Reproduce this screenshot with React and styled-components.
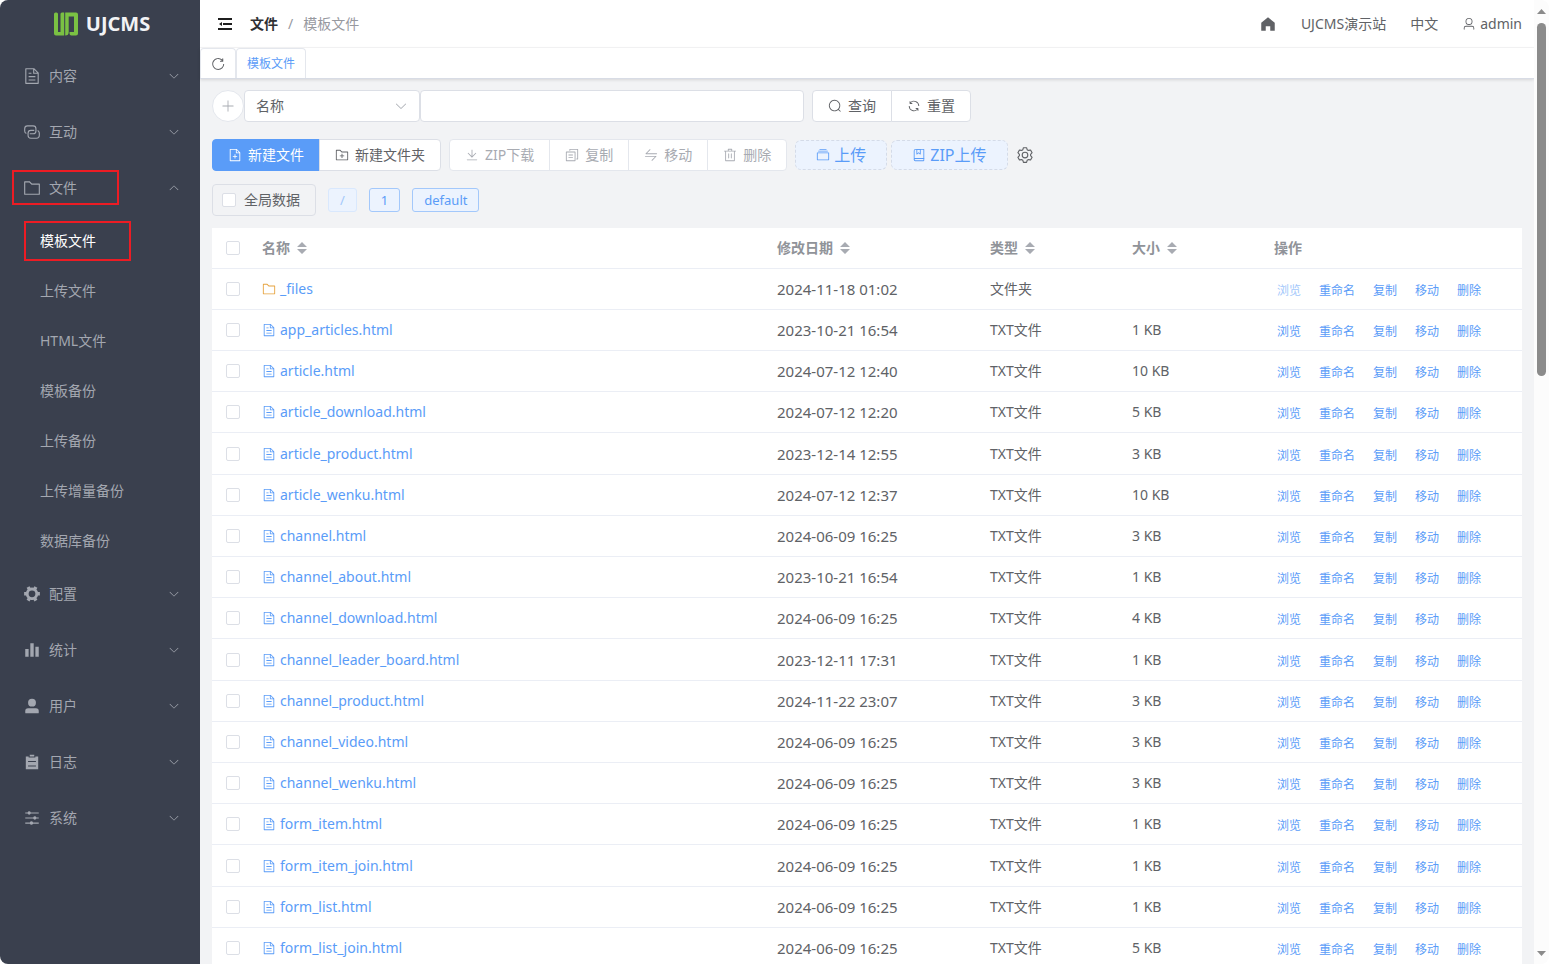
import React, { useState } from 'react';
import styled, { createGlobalStyle, css } from 'styled-components';

/* ─────────────────────────────────────────────
   ICONS
───────────────────────────────────────────── */
const DOC_BODY = 'M832 384H576V128H192v768h640V384zm-26.496-64L640 154.496V320h165.504zM160 64h480l256 256v608a32 32 0 0 1-32 32H160a32 32 0 0 1-32-32V96a32 32 0 0 1 32-32z';
const FOLDER_BODY = 'M128 192v640h768V320H485.76L357.504 192H128zm-32-64h287.872l128.384 128H928a32 32 0 0 1 32 32v576a32 32 0 0 1-32 32H96a32 32 0 0 1-32-32V160a32 32 0 0 1 32-32z';

const PATHS = {
  document: [DOC_BODY, 'M320 512h384v64H320v-64zm0-192h160v64H320v-64zm0 384h384v64H320v-64z'],
  documentAdd: [DOC_BODY, 'M480 576V448h64v128h128v64H544v128h-64V640H352v-64h128z'],
  folder: [FOLDER_BODY],
  folderAdd: [FOLDER_BODY, 'M480 544V416h64v128h128v64H544v128h-64V608H352v-64h128z'],
  arrowDown: ['M831.872 340.864 512 652.672 192.128 340.864a30.592 30.592 0 0 0-42.752 0 29.12 29.12 0 0 0 0 41.6L489.664 714.24a32 32 0 0 0 44.672 0l340.288-331.712a29.12 29.12 0 0 0 0-41.728 30.592 30.592 0 0 0-42.752 0z'],
  search: ['m795.904 750.72 124.992 124.928a32 32 0 0 1-45.248 45.248L750.656 795.904a416 416 0 1 1 45.248-45.248zM480 832a352 352 0 1 0 0-704 352 352 0 0 0 0 704z'],
  refresh: ['M771.776 794.88A384 384 0 0 1 128 512h64a320 320 0 0 0 555.712 216.448H654.72a32 32 0 1 1 0-64h149.056a32 32 0 0 1 32 32v148.928a32 32 0 1 1-64 0v-50.56zM276.288 295.616h92.992a32 32 0 0 1 0 64H220.16a32 32 0 0 1-32-32V178.56a32 32 0 0 1 64 0v50.56A384 384 0 0 1 896.128 512h-64a320 320 0 0 0-555.776-216.384z'],
  refreshRight: ['M784.512 230.272v-50.56a32 32 0 1 1 64 0v149.056a32 32 0 0 1-32 32H667.52a32 32 0 1 1 0-64h92.992A320 320 0 1 0 524.8 833.152a320 320 0 0 0 320-320h64a384 384 0 0 1-384 384 384 384 0 0 1-384-384 384 384 0 0 1 643.712-282.88z'],
  plus: ['M480 480V128a32 32 0 0 1 64 0v352h352a32 32 0 1 1 0 64H544v352a32 32 0 1 1-64 0V544H128a32 32 0 0 1 0-64h352z'],
  download: ['M160 832h704a32 32 0 1 1 0 64H160a32 32 0 1 1 0-64zm384-253.696 236.288-236.352 45.248 45.248L508.8 704 192 387.2l45.248-45.248L480 584.704V128h64v450.304z'],
  copy: ['M128 320v576h576V320H128zm-32-64h640a32 32 0 0 1 32 32v640a32 32 0 0 1-32 32H96a32 32 0 0 1-32-32V288a32 32 0 0 1 32-32zM960 96v704a32 32 0 0 1-32 32h-96v-64h64V128H384v64h-64V96a32 32 0 0 1 32-32h576a32 32 0 0 1 32 32zM256 672h320v64H256v-64zm0-192h320v64H256v-64z'],
  move: ['M118.656 438.656a32 32 0 0 1 0-45.248L416 96l4.48-3.776A32 32 0 0 1 461.248 96l3.712 4.48a32.064 32.064 0 0 1-3.712 40.832L218.56 384H928a32 32 0 1 1 0 64H141.248a32 32 0 0 1-22.592-9.344zM64 608a32 32 0 0 1 32-32h786.752a32 32 0 0 1 22.656 54.592L608 928l-4.48 3.776a32.064 32.064 0 0 1-40.832-49.024L805.632 640H96a32 32 0 0 1-32-32z'],
  trash: ['M160 256H96a32 32 0 0 1 0-64h256V95.936a32 32 0 0 1 32-32h256a32 32 0 0 1 32 32V192h256a32 32 0 1 1 0 64h-64v672a32 32 0 0 1-32 32H192a32 32 0 0 1-32-32V256zm448-64v-64H416v64h192zM224 896h576V256H224v640zm192-128a32 32 0 0 1-32-32V416a32 32 0 0 1 64 0v320a32 32 0 0 1-32 32zm192 0a32 32 0 0 1-32-32V416a32 32 0 0 1 64 0v320a32 32 0 0 1-32 32z'],
  files: ['M128 384v448h768V384H128zm-32-64h832a32 32 0 0 1 32 32v512a32 32 0 0 1-32 32H96a32 32 0 0 1-32-32V352a32 32 0 0 1 32-32zm64-128h704v64H160v-64zm96-128h512v64H256V64z'],
  collection: [
    'M192 736h640V128H256a64 64 0 0 0-64 64v544zm64-672h608a32 32 0 0 1 32 32v672a32 32 0 0 1-32 32H160l-32 57.536V192A128 128 0 0 1 256 64z',
    'M240 800a48 48 0 1 0 0 96h592v-96H240zm0-64h656v160a64 64 0 0 1-64 64H240a112 112 0 0 1 0-224z',
    'M384 128v250.88l96-76.8 96 76.8V128H384zm-64-64h320v381.44a32 32 0 0 1-51.968 24.96L480 384l-108.032 86.4A32 32 0 0 1 320 445.44V64z',
  ],
  setting: ['M600.704 64a32 32 0 0 1 30.464 22.208l35.2 109.376c14.784 7.232 28.928 15.36 42.432 24.512l112.384-24.192a32 32 0 0 1 34.432 15.36L944.32 364.8a32 32 0 0 1-4.032 37.504l-77.12 85.12a357.12 357.12 0 0 1 0 49.024l77.12 85.248a32 32 0 0 1 4.032 37.504l-88.704 153.6a32 32 0 0 1-34.432 15.296L708.8 803.904c-13.44 9.088-27.648 17.28-42.368 24.512l-35.264 109.376A32 32 0 0 1 600.704 960H423.296a32 32 0 0 1-30.464-22.208L357.696 828.48a351.616 351.616 0 0 1-42.56-24.64l-112.32 24.256a32 32 0 0 1-34.432-15.36L79.68 659.2a32 32 0 0 1 4.032-37.504l77.12-85.248a357.12 357.12 0 0 1 0-48.896l-77.12-85.248A32 32 0 0 1 79.68 364.8l88.704-153.6a32 32 0 0 1 34.432-15.296l112.32 24.256c13.568-9.152 27.776-17.408 42.56-24.64l35.2-109.312A32 32 0 0 1 423.232 64H600.64zm-23.424 64H446.72l-36.352 113.088-24.512 11.968a294.113 294.113 0 0 0-34.816 20.096l-22.656 15.36-116.224-25.088-65.28 113.152 79.68 88.192-1.92 27.136a293.12 293.12 0 0 0 0 40.192l1.92 27.136-79.808 88.192 65.344 113.152 116.224-25.024 22.656 15.296a294.113 294.113 0 0 0 34.816 20.096l24.512 11.968L446.72 896h130.688l36.48-113.152 24.448-11.904a288.282 288.282 0 0 0 34.752-20.096l22.592-15.296 116.288 25.024 65.28-113.152-79.744-88.192 1.92-27.136a293.12 293.12 0 0 0 0-40.256l-1.92-27.136 79.808-88.128-65.344-113.152-116.288 24.96-22.592-15.232a287.616 287.616 0 0 0-34.752-20.096l-24.448-11.904L577.344 128zM512 320a192 192 0 1 1 0 384 192 192 0 0 1 0-384zm0 64a128 128 0 1 0 0 256 128 128 0 0 0 0-256z'],
  home: ['M512 128 128 447.936V896h255.936V640H640v256h255.936V447.936z'],
  user: ['M512 512a192 192 0 1 0 0-384 192 192 0 0 0 0 384zm0 64a256 256 0 1 1 0-512 256 256 0 0 1 0 512zm320 320v-96a96 96 0 0 0-96-96H288a96 96 0 0 0-96 96v96a32 32 0 1 1-64 0v-96a160 160 0 0 1 160-160h448a160 160 0 0 1 160 160v96a32 32 0 1 1-64 0z'],
  userFilled: ['M288 320a224 224 0 1 0 448 0 224 224 0 1 0-448 0zm544 608H160a32 32 0 0 1-32-32v-96a160 160 0 0 1 160-160h448a160 160 0 0 1 160 160v96a32 32 0 0 1-32 32z'],
  connection: [
    'M640 384v64H448a128 128 0 0 0-128 128v128a128 128 0 0 0 128 128h320a128 128 0 0 0 128-128V576a128 128 0 0 0-64-110.848V394.88c74.56 26.368 128 97.472 128 181.056v128a192 192 0 0 1-192 192H448a192 192 0 0 1-192-192V576a192 192 0 0 1 192-192h192z',
    'M384 640v-64h192a128 128 0 0 0 128-128V320a128 128 0 0 0-128-128H256a128 128 0 0 0-128 128v128a128 128 0 0 0 64 110.848v70.272A192.064 192.064 0 0 1 64 448V320a192 192 0 0 1 192-192h320a192 192 0 0 1 192 192v128a192 192 0 0 1-192 192H384z',
  ],
  tools: ['M764.416 254.72a351.68 351.68 0 0 1 86.336 149.184H960v192.064H850.752a351.68 351.68 0 0 1-86.336 149.312l54.72 94.72-166.272 96-54.592-94.72a352.64 352.64 0 0 1-172.48 0L371.136 936l-166.272-96 54.72-94.72a351.68 351.68 0 0 1-86.336-149.312H64v-192h109.248a351.68 351.68 0 0 1 86.336-149.312L204.8 160l166.208-96h.192l54.656 94.592a352.64 352.64 0 0 1 172.48 0L652.8 64h.128L819.2 160l-54.72 94.72zM704 499.968a192 192 0 1 0-384 0 192 192 0 0 0 384 0z'],
  histogram: ['M416 896V128h192v768H416zm-288 0V448h192v448H128zm576 0V320h192v576H704z'],
  list: ['M704 192h160v736H160V192h160v64h384v-64zM288 512h448v-64H288v64zm0 256h448v-64H288v64zm96-576V96h256v96H384z'],
  operation: ['M389.44 768a96.064 96.064 0 0 1 181.12 0H896v64H570.56a96.064 96.064 0 0 1-181.12 0H128v-64h261.44zm192-288a96.064 96.064 0 0 1 181.12 0H896v64H762.56a96.064 96.064 0 0 1-181.12 0H128v-64h453.44zm-320-288a96.064 96.064 0 0 1 181.12 0H896v64H442.56a96.064 96.064 0 0 1-181.12 0H128v-64h133.44z'],
};

const Svg = styled.svg`
  display: block;
  flex-shrink: 0;
  fill: currentColor;
`;

function Icon({ name, size = 14, className }) {
  return (
    <Svg viewBox="0 0 1024 1024" width={size} height={size} className={className} aria-hidden="true">
      {PATHS[name].map(d => <path key={d} fillRule="evenodd" d={d} />)}
    </Svg>
  );
}

/* ─────────────────────────────────────────────
   GLOBAL
───────────────────────────────────────────── */
const GlobalStyle = createGlobalStyle`
  *, *::before, *::after { box-sizing: border-box; }
  body {
    margin: 0;
    overflow: hidden;
    background: #fff;
    color: #606266;
    font-family: "Noto Sans", "Noto Sans CJK SC", sans-serif;
    font-size: 14px;
    line-height: 20px;
  }
  button, input, select { font: inherit; color: inherit; }
  a { text-decoration: none; color: inherit; }
`;

/* ─────────────────────────────────────────────
   LAYOUT SHELL
───────────────────────────────────────────── */
const Shell = styled.div`
  display: flex;
  height: 100vh;
  border-radius: 8px;
  overflow: hidden;
`;

/* ── SIDEBAR ── */
const Sidebar = styled.aside`
  width: 200px;
  flex-shrink: 0;
  background: #3a404e;
  color: #a3a7b0;
`;

const Brand = styled.a`
  display: flex; align-items: center; justify-content: center;
  gap: 8px;
  height: 48px;
  padding-left: 4px;
  font-size: 20px;
  font-weight: 700;
  color: #f2f3f5;
`;

const Group = styled.button`
  display: flex; align-items: center;
  gap: 8px;
  width: 100%;
  height: 56px;
  padding: 0 20px 0 23px;
  border: none;
  background: none;
  text-align: left;
  cursor: pointer;
`;

const GroupLabel = styled.span`
  flex: 1;
`;

const Chevron = styled(Icon)`
  transform: ${({ $open }) => ($open ? 'rotate(180deg)' : 'none')};
`;

const SubMenu = styled.div`
  display: flex; flex-direction: column;
`;

const SubItem = styled.a`
  display: flex; align-items: center;
  height: 50px;
  padding-left: 40px;
  color: ${({ $active }) => ($active ? '#fff' : 'inherit')};
`;

const MenuSlot = styled.div`
  position: relative;
`;

/* red frame laid over a menu entry */
const Mark = styled.span`
  position: absolute;
  left: ${({ $left }) => $left}px;
  top: ${({ $top }) => $top}px;
  bottom: ${({ $bottom }) => $bottom}px;
  width: 107px;
  border: 2px solid #ec1c24;
  pointer-events: none;
`;

/* ── MAIN AREA ── */
const Main = styled.main`
  flex: 1;
  min-width: 0;
  display: flex; flex-direction: column;
  background: #f2f3f5;
`;

const TopBar = styled.header`
  display: flex; align-items: center;
  flex-shrink: 0;
  height: 48px;
  padding: 0 12px 0 18px;
  background: #fff;
  border-bottom: 1px solid #f6f6f7;
`;

const IconButton = styled.button`
  display: inline-flex; align-items: center; justify-content: center;
  padding: 0;
  border: none;
  background: none;
  cursor: pointer;
`;

const Crumbs = styled.nav`
  flex: 1;
  display: flex; align-items: center;
  gap: 10px;
  margin-left: 18px;
  color: #97999f;
`;

const CrumbLink = styled.a`
  font-weight: 700;
  color: #303133;
`;

const TopLinks = styled.div`
  display: flex; align-items: center;
  gap: 24px;
`;

const TopLink = styled.a`
  display: inline-flex; align-items: center;
  gap: 4px;
`;

const TabBar = styled.div`
  display: flex;
  flex-shrink: 0;
  height: 31px;
  padding-right: 1px;
  background: #fff;
  border-bottom: 1px solid #d8dce5;
  box-shadow: 0 1px 3px rgba(0,0,0,.12);
`;

const Tab = styled.button`
  display: inline-flex; align-items: center; justify-content: center;
  padding: 0 ${({ $icon }) => ($icon ? 9 : 10)}px;
  border: 1px solid #e4e7ed;
  border-bottom: none;
  border-radius: 4px 4px 0 0;
  background: #fff;
  font-size: 12px;
  color: ${({ $icon }) => ($icon ? '#606266' : '#5a9cf8')};
  cursor: pointer;
`;

const Content = styled.div`
  flex: 1;
  min-height: 0;
  overflow: hidden;
  padding: 11px 12px 0;
`;

/* ── TOOLBARS ── */
const Row = styled.div`
  display: flex; align-items: center;
  gap: ${({ $gap }) => $gap || 8}px;
  margin-bottom: ${({ $mb }) => $mb || 0}px;
`;

const field = css`
  height: 32px;
  border: 1px solid #dcdfe6;
  border-radius: 4px;
  background: #fff;
`;

const RoundButton = styled.button`
  ${field}
  display: inline-flex; align-items: center; justify-content: center;
  width: 32px;
  padding: 0;
  border-radius: 50%;
  border-color: #e4e7ed;
  color: #a8abb2;
`;

const SelectBox = styled.div`
  display: grid;
  align-items: center;
  width: 176px;

  > * { grid-area: 1 / 1; }
  svg { justify-self: end; margin-right: 12px; color: #a8abb2; pointer-events: none; }
`;

const Select = styled.select`
  ${field}
  appearance: none;
  width: 100%;
  padding: 0 11px;
`;

const TextInput = styled.input`
  ${field}
  width: 384px;
  padding: 0 11px;
  outline: none;
`;

const SearchGroup = styled.div`
  display: flex; align-items: center;
`;

const ButtonGroup = styled.div`
  display: flex;
`;

const Button = styled.button`
  ${field}
  display: inline-flex; align-items: center; justify-content: center;
  gap: 6px;
  padding: 0 15px;
  cursor: pointer;

  &:not(:first-child) { border-top-left-radius: 0; border-bottom-left-radius: 0; margin-left: -1px; }
  &:not(:last-child) { border-top-right-radius: 0; border-bottom-right-radius: 0; }

  &:disabled { color: #a8abb2; border-color: #e4e7ed; cursor: not-allowed; }

  ${({ $primary }) => $primary && css`
    background: #5a9cf8;
    border-color: #5a9cf8;
    color: #fff;
  `}
`;

const DropButton = styled.button`
  display: inline-flex; align-items: center; justify-content: center;
  gap: 4px;
  height: 30px;
  padding: 0 20px;
  border: 1px dashed #d4dbe8;
  border-radius: 6px;
  background: #ecf3fe;
  color: #5a9cf8;
  font-size: 16px;
  cursor: pointer;
`;

const CheckLabel = styled.label`
  ${field}
  display: inline-flex; align-items: center;
  gap: 8px;
  padding: 0 15px 0 9px;
  background: #f2f3f5;
`;

const Checkbox = styled.input.attrs({ type: 'checkbox' })`
  appearance: none;
  display: block;
  width: 14px;
  height: 14px;
  margin: 0;
  border: 1px solid #dcdfe6;
  border-radius: 2px;
  background: #fff;
  &:checked { background: #5a9cf8; border-color: #5a9cf8; }
`;

const PathTag = styled.button`
  height: 24px;
  padding: 0 11px;
  border: 1px solid #a3c8fb;
  border-radius: 3px;
  background: #ecf3fe;
  color: #5a9cf8;
  font-size: 13px;
  line-height: 20px;
  &:disabled { color: #a3c8fb; border-color: #d9e8fd; }
`;

/* ── TABLE ── */
const Table = styled.table`
  width: 100%;
  table-layout: fixed;
  border-collapse: separate;
  border-spacing: 0;
  background: #fff;
`;

const Col = styled.col`
  width: ${({ $w }) => ($w ? `${$w}px` : 'auto')};
`;

const Th = styled.th`
  height: 41px;
  padding: 0 8px;
  border-bottom: 1px solid #ebeef5;
  text-align: left;
  font-weight: 700;
  color: #909399;
`;

const SortLabel = styled.span`
  display: inline-flex; align-items: center;
  gap: 7px;
`;

const FileRow = styled.tr`
  height: 41px;
  &:nth-child(5n) { height: 42px; }
`;

const Td = styled.td`
  padding: 0 8px;
  border-bottom: 1px solid #ebeef5;
  font-size: ${({ $date }) => ($date ? 15 : 14)}px;
  white-space: nowrap;
`;

const CheckCell = styled(Td)`
  padding: 0 14px;
`;

const CheckHead = styled(Th)`
  padding: 0 14px;
`;

const FileLink = styled.a`
  display: flex; align-items: center;
  gap: 4px;
  color: #5a9cf8;
  svg { color: ${({ $folder }) => ($folder ? '#e6a23c' : 'inherit')}; }
`;

const Actions = styled.div`
  display: flex;
  gap: 18px;
  padding: 4px 3px 0;
`;

const ActionButton = styled.button`
  padding: 0;
  border: none;
  background: none;
  color: #5a9cf8;
  font-size: 12px;
  cursor: pointer;
  &:disabled { color: #a3c8fb; cursor: not-allowed; }
`;

/* ── SCROLLBAR ── */
const ScrollTrack = styled.div`
  display: flex; flex-direction: column; align-items: center;
  flex-shrink: 0;
  width: 15px;
  padding: 9px 0 8px;
  background: #fcfcfc;
  color: #8b8b8b;
`;

const ScrollThumb = styled.div`
  width: 9px;
  height: 353px;
  margin: 9px 0 auto;
  border-radius: 5px;
  background: #8b8b8b;
`;

/* ─────────────────────────────────────────────
   DATA
───────────────────────────────────────────── */
const MENU = [
  { icon: 'document', label: '内容' },
  { icon: 'connection', label: '互动' },
  {
    icon: 'folder', label: '文件', open: true,
    children: ['模板文件', '上传文件', 'HTML文件', '模板备份', '上传备份', '上传增量备份', '数据库备份'],
  },
  { icon: 'tools', label: '配置' },
  { icon: 'histogram', label: '统计' },
  { icon: 'userFilled', label: '用户' },
  { icon: 'list', label: '日志' },
  { icon: 'operation', label: '系统' },
];

const FILES = [
  ['_files', '2024-11-18 01:02', ''],
  ['app_articles.html', '2023-10-21 16:54', '1 KB'],
  ['article.html', '2024-07-12 12:40', '10 KB'],
  ['article_download.html', '2024-07-12 12:20', '5 KB'],
  ['article_product.html', '2023-12-14 12:55', '3 KB'],
  ['article_wenku.html', '2024-07-12 12:37', '10 KB'],
  ['channel.html', '2024-06-09 16:25', '3 KB'],
  ['channel_about.html', '2023-10-21 16:54', '1 KB'],
  ['channel_download.html', '2024-06-09 16:25', '4 KB'],
  ['channel_leader_board.html', '2023-12-11 17:31', '1 KB'],
  ['channel_product.html', '2024-11-22 23:07', '3 KB'],
  ['channel_video.html', '2024-06-09 16:25', '3 KB'],
  ['channel_wenku.html', '2024-06-09 16:25', '3 KB'],
  ['form_item.html', '2024-06-09 16:25', '1 KB'],
  ['form_item_join.html', '2024-06-09 16:25', '1 KB'],
  ['form_list.html', '2024-06-09 16:25', '1 KB'],
  ['form_list_join.html', '2024-06-09 16:25', '5 KB'],
];

const ACTIONS = ['浏览', '重命名', '复制', '移动', '删除'];
const COLUMNS = ['名称', '修改日期', '类型', '大小'];

/* ─────────────────────────────────────────────
   COMPONENTS
───────────────────────────────────────────── */
function Logo() {
  return (
    <svg width="24" height="24" viewBox="0 0 24 24" fill="#7ac143" aria-hidden="true">
      <path d="M1.500 0.500H2.500Q4 0.500 4 2V20H6.500V2Q6.500 0.500 8 0.500H10.200V23.500H2Q0 23.500 0 21.500V2Q0 0.500 1.500 0.500z" />
      <path d="M11.200 0.500H22Q24 0.500 24 2.500V21.500Q24 23.500 22 23.500H17.500Q15.500 23.500 15.500 21.500V20H20V4.500H14.700V20Q14.700 23.500 11.200 23.500z" />
    </svg>
  );
}

function FoldIcon() {
  return (
    <svg width="14" height="12" viewBox="0 0 14 12" fill="#1f1f1f" aria-hidden="true">
      <path d="M0 0h14v2H0zM5 5h9v2H5zM0 10h14v2H0zM1 6l3-2v4z" />
    </svg>
  );
}

function SortCaret() {
  return (
    <svg width="10" height="12" viewBox="0 0 10 12" fill="#a8abb2" aria-hidden="true">
      <path d="M0 5l5-5 5 5zM0 7h10l-5 5z" />
    </svg>
  );
}

function SideMenu() {
  const [opened, setOpened] = useState(() => MENU.filter(m => m.open).map(m => m.label));
  const toggle = label =>
    setOpened(prev => (prev.includes(label) ? prev.filter(l => l !== label) : [...prev, label]));

  return (
    <nav>
      {MENU.map(({ icon, label, children }) => {
        const open = opened.includes(label);
        return (
          <div key={label}>
            <MenuSlot>
              <Group type="button" aria-expanded={open} onClick={() => toggle(label)}>
                <Icon name={icon} size={18} />
                <GroupLabel>{label}</GroupLabel>
                <Chevron name="arrowDown" size={12} $open={open} />
              </Group>
              {children && <Mark $left={12} $top={10} $bottom={11} />}
            </MenuSlot>
            {children && open && (
              <SubMenu>
                {children.map((child, i) => (
                  <MenuSlot key={child}>
                    <SubItem href="#" $active={i === 0}>{child}</SubItem>
                    {i === 0 && <Mark $left={24} $top={5} $bottom={5} />}
                  </MenuSlot>
                ))}
              </SubMenu>
            )}
          </div>
        );
      })}
    </nav>
  );
}

function FileTable() {
  return (
    <Table>
      <colgroup>
        <Col $w={42} />
        <Col />
        <Col $w={213} />
        <Col $w={142} />
        <Col $w={142} />
        <Col $w={256} />
      </colgroup>
      <thead>
        <tr>
          <CheckHead><Checkbox aria-label="全选" /></CheckHead>
          {COLUMNS.map(name => (
            <Th key={name}><SortLabel>{name}<SortCaret /></SortLabel></Th>
          ))}
          <Th>操作</Th>
        </tr>
      </thead>
      <tbody>
        {FILES.map(([name, date, size]) => {
          const folder = name === '_files';
          return (
            <FileRow key={name}>
              <CheckCell><Checkbox aria-label={name} /></CheckCell>
              <Td>
                <FileLink href="#" $folder={folder}>
                  <Icon name={folder ? 'folder' : 'document'} />
                  {name}
                </FileLink>
              </Td>
              <Td $date>{date}</Td>
              <Td>{folder ? '文件夹' : 'TXT文件'}</Td>
              <Td>{size}</Td>
              <Td>
                <Actions>
                  {ACTIONS.map((action, i) => (
                    <ActionButton key={action} type="button" disabled={folder && i === 0}>{action}</ActionButton>
                  ))}
                </Actions>
              </Td>
            </FileRow>
          );
        })}
      </tbody>
    </Table>
  );
}

export default function App() {
  const [keyword, setKeyword] = useState('');

  return (
    <Shell>
      <GlobalStyle />
      <Sidebar>
        <Brand href="#"><Logo />UJCMS</Brand>
        <SideMenu />
      </Sidebar>

      <Main>
        <TopBar>
          <IconButton type="button" aria-label="折叠菜单"><FoldIcon /></IconButton>
          <Crumbs>
            <CrumbLink href="#">文件</CrumbLink>
            <span>/</span>
            <span>模板文件</span>
          </Crumbs>
          <TopLinks>
            <TopLink href="#" aria-label="首页"><Icon name="home" size={18} /></TopLink>
            <TopLink href="#">UJCMS演示站</TopLink>
            <TopLink href="#">中文</TopLink>
            <TopLink href="#"><Icon name="user" />admin</TopLink>
          </TopLinks>
        </TopBar>

        <TabBar>
          <Tab type="button" $icon aria-label="刷新"><Icon name="refreshRight" size={16} /></Tab>
          <Tab type="button">模板文件</Tab>
        </TabBar>

        <Content>
          <Row $mb={17}>
            <SearchGroup>
              <RoundButton type="button" aria-label="添加条件"><Icon name="plus" /></RoundButton>
              <SelectBox>
                <Select aria-label="查询字段"><option>名称</option></Select>
                <Icon name="arrowDown" />
              </SelectBox>
              <TextInput aria-label="关键词" value={keyword} onChange={e => setKeyword(e.target.value)} />
            </SearchGroup>
            <ButtonGroup>
              <Button type="button"><Icon name="search" />查询</Button>
              <Button type="button"><Icon name="refresh" />重置</Button>
            </ButtonGroup>
          </Row>

          <Row $mb={13}>
            <ButtonGroup>
              <Button type="button" $primary><Icon name="documentAdd" />新建文件</Button>
              <Button type="button"><Icon name="folderAdd" />新建文件夹</Button>
            </ButtonGroup>
            <ButtonGroup>
              <Button type="button" disabled><Icon name="download" />ZIP下载</Button>
              <Button type="button" disabled><Icon name="copy" />复制</Button>
              <Button type="button" disabled><Icon name="move" />移动</Button>
              <Button type="button" disabled><Icon name="trash" />删除</Button>
            </ButtonGroup>
            <Row $gap={4}>
              <DropButton type="button"><Icon name="files" />上传</DropButton>
              <DropButton type="button"><Icon name="collection" />ZIP上传</DropButton>
            </Row>
            <IconButton type="button" aria-label="设置"><Icon name="setting" size={18} /></IconButton>
          </Row>

          <Row $gap={12} $mb={12}>
            <CheckLabel><Checkbox />全局数据</CheckLabel>
            <PathTag type="button" disabled>/</PathTag>
            <PathTag type="button">1</PathTag>
            <PathTag type="button">default</PathTag>
          </Row>

          <FileTable />
        </Content>
      </Main>

      <ScrollTrack>
        <svg width="9" height="5" viewBox="0 0 9 5" fill="currentColor" aria-hidden="true"><path d="M0 5l4.500-5L9 5z" /></svg>
        <ScrollThumb />
        <svg width="9" height="5" viewBox="0 0 9 5" fill="currentColor" aria-hidden="true"><path d="M0 0h9L4.500 5z" /></svg>
      </ScrollTrack>
    </Shell>
  );
}
